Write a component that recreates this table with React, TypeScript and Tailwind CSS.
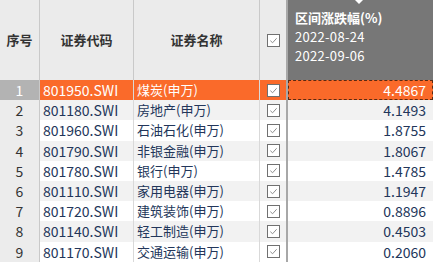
const rows = [
  { code: "801950.SWI", name: "煤炭(申万)", value: "4.4867" },
  { code: "801180.SWI", name: "房地产(申万)", value: "4.1493" },
  { code: "801960.SWI", name: "石油石化(申万)", value: "1.8755" },
  { code: "801790.SWI", name: "非银金融(申万)", value: "1.8067" },
  { code: "801780.SWI", name: "银行(申万)", value: "1.4785" },
  { code: "801110.SWI", name: "家用电器(申万)", value: "1.1947" },
  { code: "801720.SWI", name: "建筑装饰(申万)", value: "0.8896" },
  { code: "801140.SWI", name: "轻工制造(申万)", value: "0.4503" },
  { code: "801170.SWI", name: "交通运输(申万)", value: "0.2060" },
];

function CheckBox() {
  return (
    <div className="flex h-[13px] w-[13px] items-center justify-center border border-[#707070] bg-white">
      <svg viewBox="0 0 10 10" className="h-[9px] w-[9px]" aria-hidden>
        <path d="M1.5 5.2 L4 7.5 L8.5 2.5" fill="none" stroke="#8c8c8c" strokeWidth="1.1" />
      </svg>
    </div>
  );
}

export default function App() {
  return (
    <div
      className="h-[263px] w-[433px] overflow-hidden bg-white text-[13px]"
      style={{ fontFamily: '"Noto Sans CJK SC", "Noto Sans", sans-serif' }}
    >
      {/* header */}
      <div className="flex h-[80px] bg-[#ebebeb] font-bold text-[#333333]">
        <div className="flex w-[40px] items-center justify-center border-r border-[#c9c9c9]">序号</div>
        <div className="flex w-[94px] items-center justify-center border-r border-[#c9c9c9]">证券代码</div>
        <div className="flex w-[126px] items-center justify-center border-r border-[#c9c9c9]">证券名称</div>
        <div className="flex w-[28px] items-center justify-center border-r-2 border-[#a8a8a8]">
          <CheckBox />
        </div>
        <div className="relative flex-1 bg-[#777777] pl-[7px] pt-[8px] leading-[19px] text-white">
          <div className="absolute left-[67px] top-0 h-0 w-0 border-x-[4px] border-t-[4px] border-x-transparent border-t-white" />
          <div>区间涨跌幅(%)</div>
          <div className="font-normal tracking-[0.3px]">2022-08-24</div>
          <div className="font-normal tracking-[0.3px]">2022-09-06</div>
        </div>
      </div>

      {rows.map((r, i) => {
        const active = i === 0;
        const rowBg = active ? "bg-[#fa6a2a]" : i % 2 === 1 ? "bg-[#f2f2f2]" : "bg-white";
        const textColor = active ? "text-white" : "text-[#22365a]";
        return (
          <div key={r.code} className={`flex h-[20.2px] leading-[20px] ${textColor}`}>
            <div
              className={`w-[40px] border-r border-[#c9c9c9] text-center text-[14px] ${
                active ? "bg-[#b3b3b3] text-white" : "bg-[#ececec] text-[#333333]"
              }`}
            >
              {i + 1}
            </div>
            <div className={`w-[94px] border-r border-[#d9d9d9] pl-[3px] text-[14px] ${rowBg}`}>{r.code}</div>
            <div className={`w-[126px] overflow-hidden whitespace-nowrap border-r border-[#d9d9d9] pl-[3px] ${rowBg}`}>
              {r.name}
            </div>
            <div className={`flex w-[28px] items-center justify-center border-r-2 border-[#a8a8a8] ${rowBg}`}>
              <CheckBox />
            </div>
            <div className={`flex-1 ${rowBg}`}>
              <div
                className={`h-full pr-[6px] text-right text-[14px] leading-[18px] ${
                  active ? "border border-dashed border-[#5a2a12]" : "border border-transparent"
                }`}
              >
                {r.value}
              </div>
            </div>
          </div>
        );
      })}
    </div>
  );
}
